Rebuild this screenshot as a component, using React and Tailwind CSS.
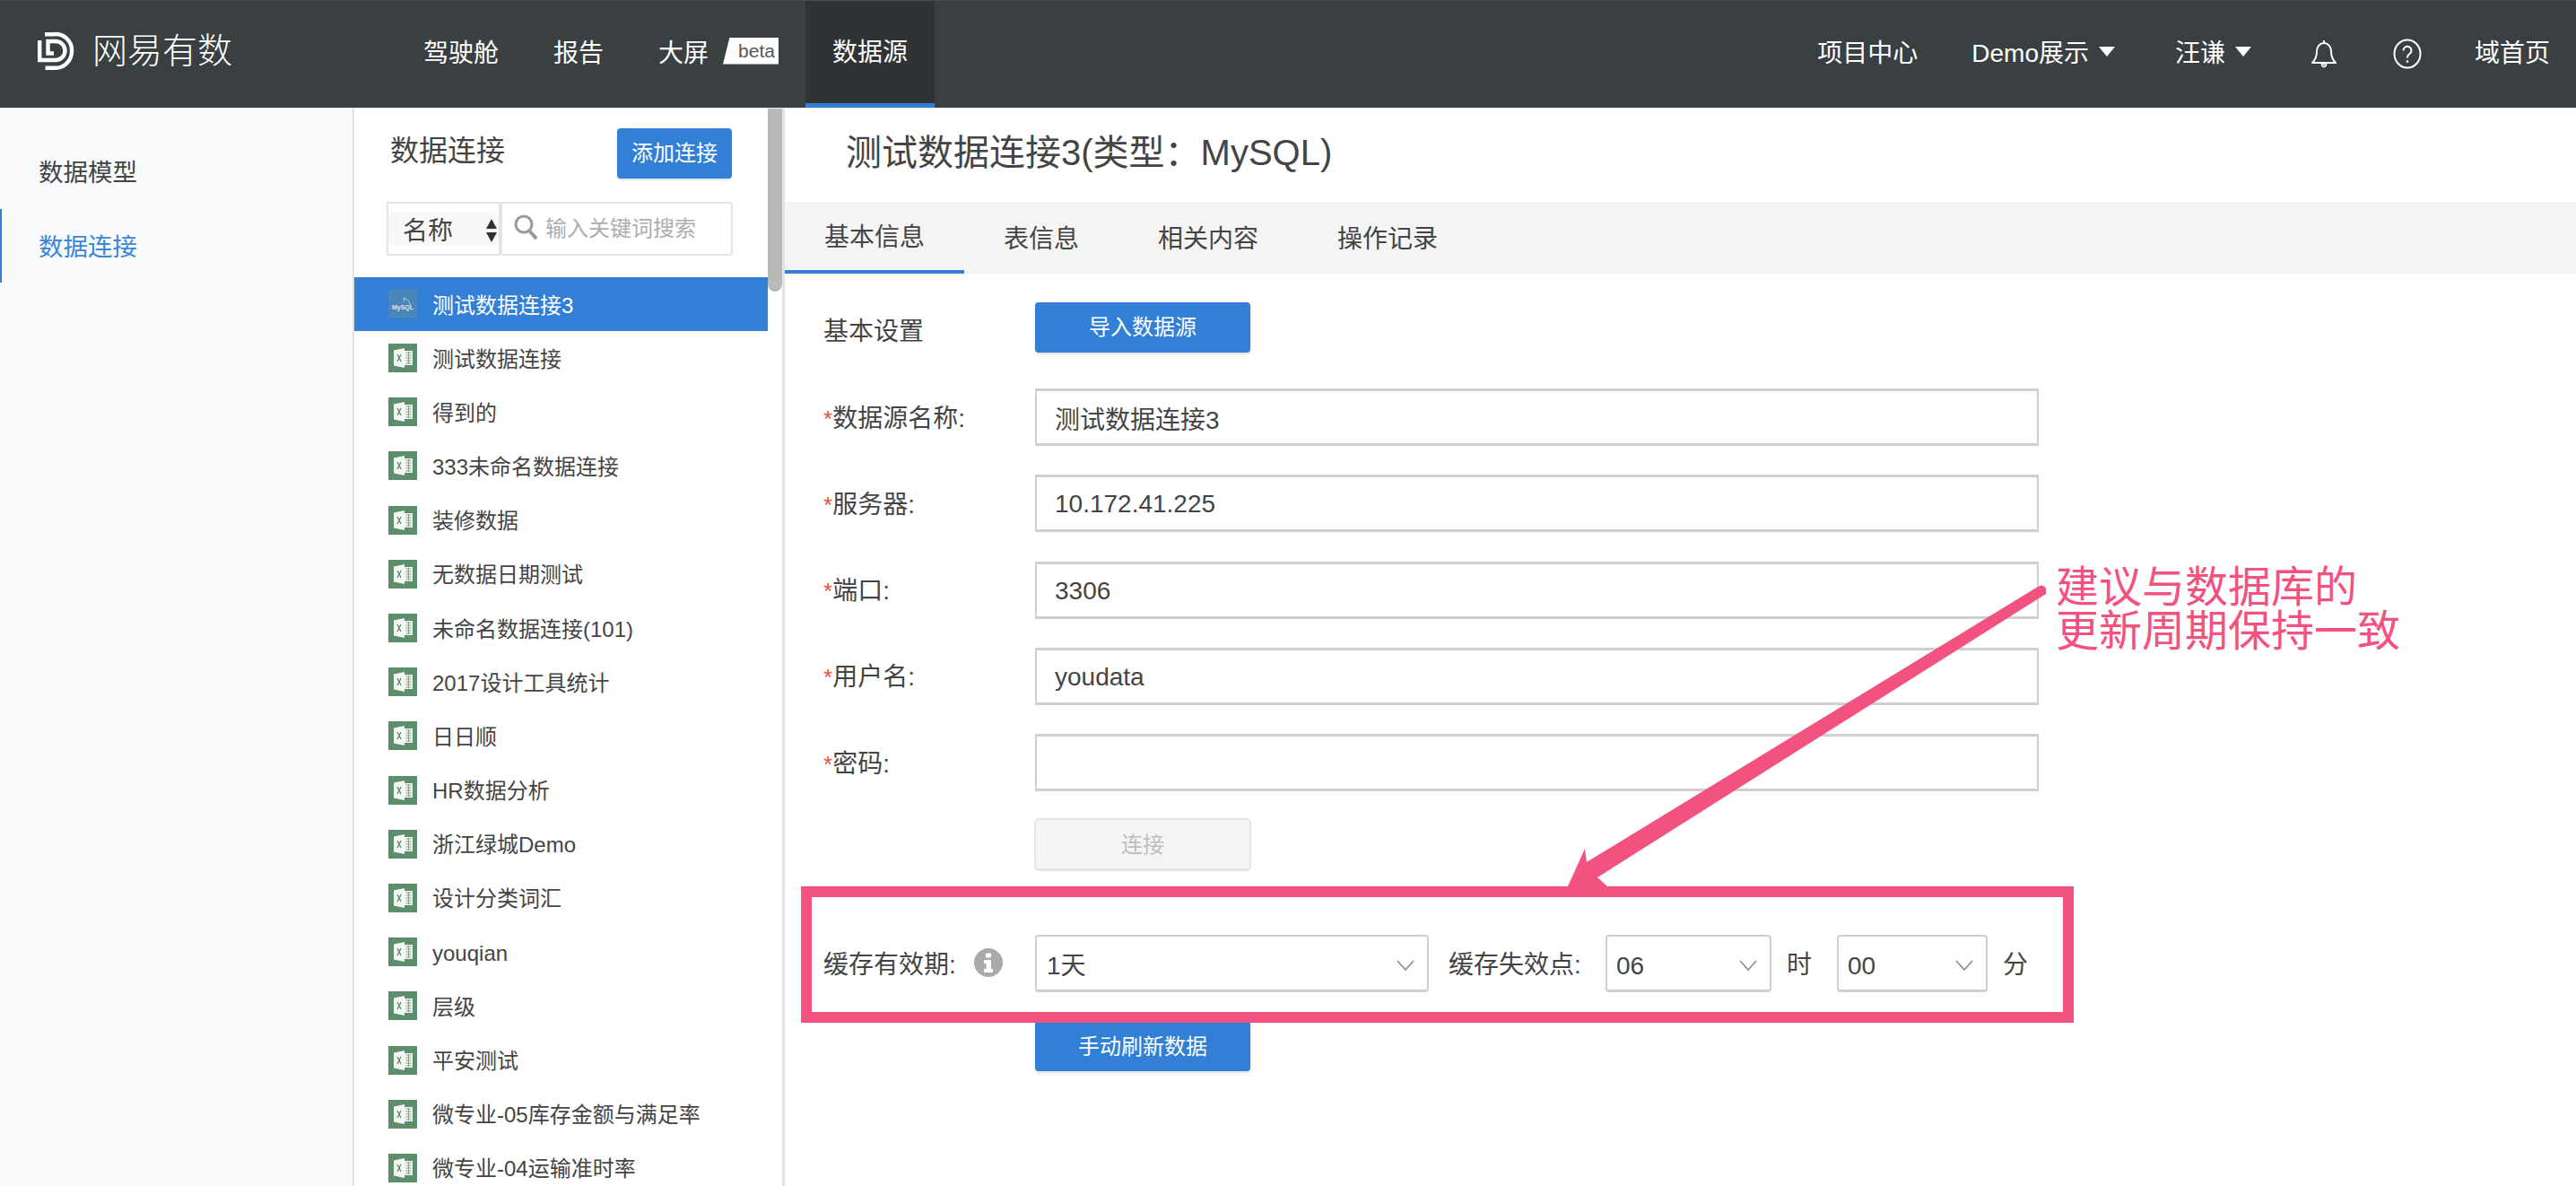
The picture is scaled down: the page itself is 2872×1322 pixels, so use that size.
function Logo() {
  return (
    <svg width="42" height="44" viewBox="42 34 42 44" fill="none" stroke="#fff" strokeWidth="4.4" className="-mt-[9px]">
      <path d="M50 37.2 H60 A18 18 0 0 1 80 56 A18.5 18.5 0 0 1 61 74.8 H50.5" />
      <path d="M44.2 44 V66 H62 A10.5 10.5 0 0 0 72.5 55.5 A10.5 10.5 0 0 0 62 45 H53.5 V58.5 H60" />
    </svg>
  );
}

function Caret() {
  return (
    <svg width="18" height="11" viewBox="0 0 18 11" className="shrink-0">
      <path d="M0 0 H18 L9 11 Z" fill="#fff" />
    </svg>
  );
}

function Bell() {
  return (
    <svg width="30" height="34" viewBox="0 0 30 34" fill="none" stroke="#fff" strokeWidth="2">
      <path d="M15 2 V5 M7 14 A8 9 0 0 1 23 14 C23 21 25 24 28 27 H2 C5 24 7 21 7 14 Z" strokeLinejoin="round" />
      <path d="M12 28 A3 4 0 0 0 18 28 Z" fill="#bbb" stroke="#fff" strokeWidth="1" />
    </svg>
  );
}

function Help() {
  return (
    <svg width="32" height="34" viewBox="0 0 32 34" fill="none" stroke="#fff" strokeWidth="2">
      <ellipse cx="16" cy="17" rx="14.5" ry="15.5" />
      <path d="M11.5 13.5 A4.5 4.5 0 1 1 18.5 17 C16.8 18 16 19 16 21.5" />
      <circle cx="16" cy="25.5" r="1.3" fill="#fff" stroke="none" />
    </svg>
  );
}

function ExcelIcon() {
  return (
    <svg width="32" height="32" viewBox="0 0 32 32" className="shrink-0">
      <rect width="32" height="32" fill="#5c8e6c" />
      <path d="M6 7.5 L18 5 V27 L6 24.5 Z" fill="#f3f6f3" />
      <path d="M18 8 H27 V24 H18 Z" fill="#f3f6f3" />
      <path d="M19.5 10 H25.5 M19.5 13 H25.5 M19.5 16 H25.5 M19.5 19 H25.5 M19.5 22 H25.5" stroke="#7fa78b" strokeWidth="1.2" />
      <path d="M22.5 9 V23" stroke="#7fa78b" strokeWidth="1" />
      <path d="M10 12 L14 20 M14 12 L10 20" stroke="#5c8e6c" strokeWidth="1.3" />
    </svg>
  );
}

function MysqlIcon() {
  return (
    <div className="relative w-[32px] h-[32px] shrink-0 bg-[#4a86b9] flex items-center justify-center overflow-hidden">
      <span className="text-[7px] leading-none text-[#dbe8f2] font-bold mt-[6px]">MySQL</span>
      <svg width="12" height="12" viewBox="0 0 12 12" fill="none" stroke="#cfe0ee" strokeWidth="0.8" className="absolute right-[5px] top-[8px]">
        <path d="M2 1 C6 2 8 5 10 10 M2 1 L3 5" />
      </svg>
    </div>
  );
}

function Chevron({ className }) {
  return (
    <svg width="20" height="12" viewBox="0 0 20 12" fill="none" stroke="#8b8b8b" strokeWidth="1.6" className={className}>
      <path d="M1 1 L10 11 L19 1" />
    </svg>
  );
}

function NavItem({ children, className = "" }) {
  return <span className={"text-[28px] leading-none text-white whitespace-nowrap " + className}>{children}</span>;
}

function Header() {
  return (
    <header className="h-[121px] shrink-0 flex items-center bg-[#3a3f42] border-t border-[#4a4e51] pl-[42px] pr-[29px]">
      <Logo />
      <span className="ml-[19px] -mt-[10px] w-[369px] text-[39px] leading-none text-white font-light">网易有数</span>
      <NavItem className="-mt-[2px]">驾驶舱</NavItem>
      <NavItem className="ml-[61px] -mt-[2px]">报告</NavItem>
      <NavItem className="ml-[61px] -mt-[2px]">大屏</NavItem>
      <span className="ml-[16px] -mt-[9px] w-[62px] h-[30px] pl-[17px] bg-white text-[21px] leading-[30px] text-[#555] [clip-path:polygon(12%_0,100%_0,100%_100%,0_100%)]">beta</span>
      <div className="ml-[30px] h-full w-[144px] bg-[#2f3336] border-b-[6px] border-[#3280d5] flex items-center justify-center">
        <NavItem className="mt-[2px]">数据源</NavItem>
      </div>
      <div className="ml-auto flex items-center">
        <NavItem className="-mt-[2px]">项目中心</NavItem>
        <NavItem className="ml-[60px] -mt-[2px]">Demo展示</NavItem>
        <span className="ml-[11px] -mt-[8px]"><Caret /></span>
        <NavItem className="ml-[67px] -mt-[2px]">汪谦</NavItem>
        <span className="ml-[11px] -mt-[8px]"><Caret /></span>
        <span className="ml-[66px] -mt-[2px]"><Bell /></span>
        <span className="ml-[62px] -mt-[2px]"><Help /></span>
        <NavItem className="ml-[59px] -mt-[2px]">域首页</NavItem>
      </div>
    </header>
  );
}

function Sidebar() {
  return (
    <aside className="w-[393px] shrink-0 bg-[#f8fafc] pt-[28px] text-[27.5px] text-[#444]">
      <div className="h-[84px] flex items-center pl-[43px] pt-[3px]">数据模型</div>
      <div className="h-[82px] flex items-center pl-[41px] pt-[3px] border-l-2 border-[#3280d5] text-[#3a86d8]">数据连接</div>
    </aside>
  );
}

const ROWS = [
  "测试数据连接", "得到的", "333未命名数据连接", "装修数据", "无数据日期测试", "未命名数据连接(101)",
  "2017设计工具统计", "日日顺", "HR数据分析", "浙江绿城Demo", "设计分类词汇", "youqian", "层级",
  "平安测试", "微专业-05库存金额与满足率", "微专业-04运输准时率",
];

function ListPanel() {
  return (
    <section className="relative w-[482px] shrink-0 border-x-[2px] border-r-[3px] border-[#e2e2e2] bg-white overflow-hidden">
      <div className="absolute right-0 top-0 w-[16px] h-[204px] bg-[#b9b9b9] rounded-b-[8px]" />
      <div className="mt-[22px] ml-[40px] w-[381px] h-[56px] flex items-center justify-between">
        <h2 className="text-[32px] leading-none text-[#444] -mt-[6px]">数据连接</h2>
        <button className="w-[128px] h-[56px] bg-[#3280d5] rounded-[4px] text-[24px] text-white shadow-[0_2px_3px_rgba(0,0,0,0.12)]">添加连接</button>
      </div>
      <div className="mt-[26px] ml-[36px] flex h-[60px]">
        <div className="w-[127px] border-2 border-[#e4e4e4] flex items-center">
          <div className="w-full h-[38px] bg-[#f8f8f8] rounded-[8px] flex items-center pl-[16px]">
            <span className="text-[28px] text-[#444] leading-none mt-[5px]">名称</span>
            <svg width="12" height="26" viewBox="0 0 12 26" className="ml-[37px] mt-[3px]">
              <path d="M6 0 L12 11 H0 Z M0 15 H12 L6 26 Z" fill="#333" />
            </svg>
          </div>
        </div>
        <div className="w-[259px] border-2 border-[#e4e4e4] rounded-[3px] flex items-center pl-[12px]">
          <svg width="30" height="30" viewBox="0 0 30 30" fill="none" stroke="#9a9a9a" strokeWidth="3" className="-mt-[4px]">
            <circle cx="12" cy="12" r="9" />
            <path d="M18 19 L26 28" strokeWidth="4" />
          </svg>
          <span className="ml-[6px] text-[24px] leading-none text-[#adadad] whitespace-nowrap">输入关键词搜索</span>
        </div>
      </div>
      <ul className="mt-[24px]">
        <li className="h-[60px] w-[461px] bg-[#3280d5] flex items-center pl-[38px] text-[24px] text-white">
          <MysqlIcon />
          <span className="ml-[17px] mt-[3px] leading-none">测试数据连接3</span>
        </li>
        {ROWS.map((r) => (
          <li key={r} className="h-[60.2px] flex items-center pl-[38px] text-[24px] text-[#444]">
            <ExcelIcon />
            <span className="ml-[17px] mt-[3px] leading-none whitespace-nowrap">{r}</span>
          </li>
        ))}
      </ul>
    </section>
  );
}

function Field({ label, value }) {
  return (
    <div className="flex items-center h-[64px]">
      <label className="w-[236px] mt-[3px] text-[28px] leading-none text-[#444] whitespace-nowrap">
        <span className="text-[#e8514a] text-[26px]">*</span>{label}:
      </label>
      <input
        readOnly
        defaultValue={value}
        className="w-[1119px] h-[64px] border-2 border-t-[3px] border-b-[3px] border-[#cfcfcf] bg-white px-[20px] pt-[2px] text-[28px] text-[#444] outline-none"
      />
    </div>
  );
}

function SelectBox({ value, className, textClass = "pl-[11px]" }) {
  return (
    <div className={"h-[64px] border-2 border-b-[3px] border-[#cfcfcf] rounded-[4px] bg-white flex items-center justify-between pr-[14px] " + textClass + " " + className}>
      <span className="text-[28px] leading-none text-[#444] mt-[6px]">{value}</span>
      <Chevron className="mt-[5px]" />
    </div>
  );
}

function Main() {
  return (
    <main className="flex-1 min-w-0 bg-white">
      <div className="h-[104px] flex items-center pl-[68px] pb-[6px]">
        <h1 className="text-[40px] leading-none text-[#444] whitespace-nowrap">测试数据连接3(类型：MySQL)</h1>
      </div>
      <nav className="h-[80px] bg-[#f4f4f4] flex text-[28px] text-[#444]">
        <div className="px-[44px] h-full pt-[3px] border-b-[4px] border-[#3280d5] flex items-center">基本信息</div>
        <div className="px-[44px] h-full pt-[3px] flex items-center">表信息</div>
        <div className="px-[44px] h-full pt-[3px] flex items-center">相关内容</div>
        <div className="px-[44px] h-full pt-[3px] flex items-center">操作记录</div>
      </nav>
      <div className="pl-[43px] pt-[32px]">
        <div className="flex items-start h-[56px]">
          <span className="w-[236px] text-[28px] leading-none text-[#444] pt-[19px]">基本设置</span>
          <button className="w-[240px] h-[56px] bg-[#3280d5] rounded-[4px] text-[24px] text-white shadow-[0_2px_3px_rgba(0,0,0,0.12)]">导入数据源</button>
        </div>
        <div className="mt-[40px] flex flex-col gap-[32.3px]">
          <Field label="数据源名称" value="测试数据连接3" />
          <Field label="服务器" value="10.172.41.225" />
          <Field label="端口" value="3306" />
          <Field label="用户名" value="youdata" />
          <Field label="密码" value="" />
        </div>
        <button className="block mt-[30px] ml-[235px] w-[242px] h-[59px] pt-[2px] bg-[#f4f4f4] border-2 border-b-[3px] border-[#e6e6e6] rounded-[5px] text-[24px] text-[#bdbdbd]">连接</button>
        <div className="mt-[71px] flex items-center h-[64px] text-[28px] text-[#444]">
          <span className="w-[168px] leading-none whitespace-nowrap mt-[3px]">缓存有效期:</span>
          <svg width="32" height="32" viewBox="0 0 32 32" className="-mt-[2px]">
            <circle cx="16" cy="16" r="16" fill="#aaa" />
            <rect x="13" y="5.5" width="6" height="5" rx="1" fill="#fff" />
            <path d="M11 13 H19 V23 H21 V27 H11 V23 H13.5 V17 H11 Z" fill="#fff" />
          </svg>
          <SelectBox value="1天" className="ml-[36px] w-[439px]" />
          <span className="ml-[22px] w-[175px] leading-none whitespace-nowrap mt-[3px]">缓存失效点:</span>
          <SelectBox value="06" className="w-[185px]" textClass="pl-[10px]" />
          <span className="ml-[17px] w-[56px] leading-none mt-[3px]">时</span>
          <SelectBox value="00" className="w-[168px]" textClass="pl-[10px]" />
          <span className="ml-[17px] leading-none mt-[3px]">分</span>
        </div>
        <button className="block mt-[32px] ml-[236px] w-[240px] h-[56px] bg-[#3280d5] rounded-[4px] text-[24px] text-white pt-[1px] shadow-[0_2px_3px_rgba(0,0,0,0.12)]">手动刷新数据</button>
      </div>
    </main>
  );
}

export default function App() {
  return (
    <div lang="zh-CN" className="relative w-[2872px] h-[1322px] overflow-hidden bg-white flex flex-col [font-family:Liberation_Sans,Noto_Sans_CJK_SC,sans-serif]">
      <Header />
      <div className="flex flex-1 min-h-0 border-t border-[#e8e8e8] -mt-px">
        <Sidebar />
        <ListPanel />
        <Main />
      </div>

      {/* Annotation overlay drawn on top of the screenshot */}
      <div className="absolute left-[893px] top-[988px] w-[1419px] h-[152px] border-[12px] border-[#f2527f]" />
      <svg width="2872" height="1322" viewBox="0 0 2872 1322" className="absolute left-0 top-0 pointer-events-none">
        <path
          d="M2272 654 Q2278 650 2281 656 L2281 662 L1781 978 L1792 988 L1748 988 L1767 946 L1769 961 Z"
          fill="#f2527f"
        />
      </svg>
      <div className="absolute left-[2292px] top-[630px] text-[48px] leading-[49px] text-[#f2527f] whitespace-nowrap">
        <div>建议与数据库的</div>
        <div>更新周期保持一致</div>
      </div>
    </div>
  );
}
